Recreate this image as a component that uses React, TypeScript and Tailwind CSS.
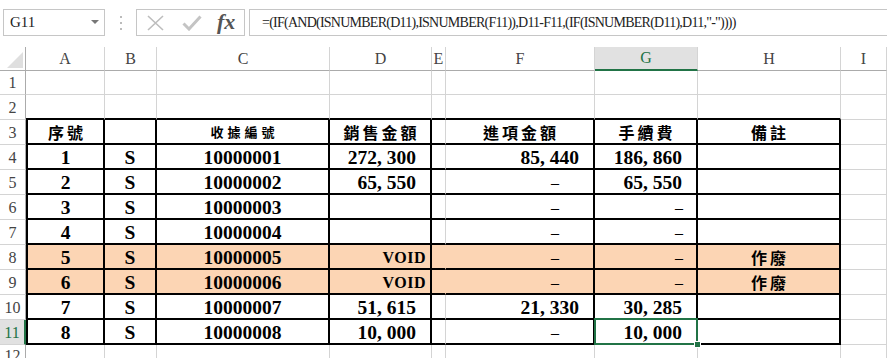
import React from 'react';

const SERIF = "font-['Liberation_Serif','Noto_Sans_CJK_TC',serif]";
const CJK = "font-['Noto_Sans_CJK_TC','Liberation_Serif',sans-serif]";

const COLS = ['A', 'B', 'C', 'D', 'E', 'F', 'G', 'H', 'I'];

type Cell = { t: string; kind?: 'num' | 'dashF' | 'dashG' | 'void' | 'center' | 'head' | 'headSmall' };

const dash = (col: 'F' | 'G'): Cell => ({ t: '–', kind: col === 'F' ? 'dashF' : 'dashG' });
const num = (t: string): Cell => ({ t, kind: 'num' });
const c = (t: string): Cell => ({ t, kind: 'center' });
const empty: Cell = { t: '' };

const TABLE: { cells: Cell[]; peach?: boolean }[] = [
  {
    cells: [
      { t: '序號', kind: 'head' },
      empty,
      { t: '收據編號', kind: 'headSmall' },
      { t: '銷售金額', kind: 'head' },
      empty,
      { t: '進項金額', kind: 'head' },
      { t: '手續費', kind: 'head' },
      { t: '備註', kind: 'head' },
    ],
  },
  { cells: [c('1'), c('S'), c('10000001'), num('272, 300'), empty, num('85, 440'), num('186, 860'), empty] },
  { cells: [c('2'), c('S'), c('10000002'), num('65, 550'), empty, dash('F'), num('65, 550'), empty] },
  { cells: [c('3'), c('S'), c('10000003'), empty, empty, dash('F'), dash('G'), empty] },
  { cells: [c('4'), c('S'), c('10000004'), empty, empty, dash('F'), dash('G'), empty] },
  { cells: [c('5'), c('S'), c('10000005'), { t: 'VOID', kind: 'void' }, empty, dash('F'), dash('G'), { t: '作廢', kind: 'head' }], peach: true },
  { cells: [c('6'), c('S'), c('10000006'), { t: 'VOID', kind: 'void' }, empty, dash('F'), dash('G'), { t: '作廢', kind: 'head' }], peach: true },
  { cells: [c('7'), c('S'), c('10000007'), num('51, 615'), empty, num('21, 330'), num('30, 285'), empty] },
  { cells: [c('8'), c('S'), c('10000008'), num('10, 000'), empty, dash('F'), num('10, 000'), empty] },
];

function CellText({ cell }: { cell: Cell }) {
  switch (cell.kind) {
    case 'head':
      return <span className={`${CJK} font-bold text-[16px] tracking-[3px] pl-[3px] text-black`}>{cell.t}</span>;
    case 'headSmall':
      return <span className={`${CJK} font-bold text-[13px] tracking-[4px] pl-[4px] text-black`}>{cell.t}</span>;
    case 'void':
      return <span className={`${SERIF} font-bold text-[16px] tracking-[0.5px] text-black`}>{cell.t}</span>;
    case 'dashF':
    case 'dashG':
      return <span className={`${SERIF} text-[16px] text-black`}>{cell.t}</span>;
    default:
      return <span className={`${SERIF} font-bold text-[19.5px] text-black`}>{cell.t}</span>;
  }
}

function justify(cell: Cell) {
  switch (cell.kind) {
    case 'num':
      return 'justify-end pr-[14px] pt-[2px]';
    case 'void':
      return 'justify-end pr-[4px] pt-[2px]';
    case 'dashF':
      return 'justify-end pr-[34px] pt-[2px]';
    case 'dashG':
      return 'justify-end pr-[13px] pt-[2px]';
    case 'center':
      return 'justify-center pt-[2px]';
    default:
      return 'justify-center pt-[1px]';
  }
}

function RowHeader({ n, selected }: { n: number; selected?: boolean }) {
  return (
    <div
      className={`${SERIF} flex items-center justify-center pt-[1px] text-[16px] border-b border-b-[#d4d4d4] ${
        selected
          ? 'bg-[#e1e1e1] text-[#217346] border-r-2 border-r-[#217346]'
          : 'bg-white text-[#444] border-r border-r-[#ababab]'
      }`}
    >
      {n}
    </div>
  );
}

function PlainRow({ n, thickBottom }: { n: number; thickBottom?: boolean }) {
  return (
    <>
      <RowHeader n={n} />
      {COLS.map((col, i) => (
        <div
          key={col}
          className={`border-r border-r-[#d4d4d4] ${
            thickBottom && i < 8 ? 'border-b-2 border-b-black' : 'border-b border-b-[#d4d4d4]'
          }`}
        />
      ))}
    </>
  );
}

function Toolbar() {
  return (
    <div className="h-[47px] flex items-start pt-[9px] bg-white">
      <div className="ml-[3px] w-[102px] h-[27px] border border-[#c6c6c6] flex items-center justify-between pl-[6px] pr-[5px]">
        <span className={`${SERIF} text-[15px] text-[#222]`}>G11</span>
        <svg width="8" height="5" viewBox="0 0 8 5">
          <path d="M0 0 L8 0 L4 4 Z" fill="#777" />
        </svg>
      </div>
      <div className="w-[31px] h-[27px] flex flex-col items-center justify-center gap-[4px]">
        <span className="w-[2px] h-[2px] bg-[#bbb]" />
        <span className="w-[2px] h-[2px] bg-[#bbb]" />
        <span className="w-[2px] h-[2px] bg-[#bbb]" />
      </div>
      <div className="w-[109px] h-[27px] border border-[#c6c6c6] flex items-center pl-[10px] gap-[18px]">
        <svg width="17" height="16" viewBox="0 0 17 16">
          <path d="M1 1 L16 15 M16 1 L1 15" stroke="#bdbdbd" strokeWidth="1.6" fill="none" />
        </svg>
        <svg width="20" height="16" viewBox="0 0 20 16">
          <path d="M1.5 8.5 L7 14 L18.5 1.5" stroke="#c4c4c4" strokeWidth="3" fill="none" />
        </svg>
        <span className={`${SERIF} italic font-bold text-[22px] leading-none text-[#555] -mt-[2px] -ml-[3px]`}>fx</span>
      </div>
      <div className="ml-[4px] flex-1 h-[27px] border-y border-l border-[#c6c6c6] flex items-center pl-[12px]">
        <span className={`${SERIF} text-[14px] tracking-[-0.75px] text-[#222] whitespace-nowrap`}>
          =(IF(AND(ISNUMBER(D11),ISNUMBER(F11)),D11-F11,(IF(ISNUMBER(D11),D11,"-"))))
        </span>
      </div>
    </div>
  );
}

export default function App() {
  return (
    <div className="w-[887px] h-[358px] overflow-hidden bg-white">
      <Toolbar />
      <div className="grid grid-cols-[26px_79px_52px_173px_102px_14px_149px_103px_143px_1fr] grid-rows-[24px_24px_25px_repeat(9,25px)_20px]">
        {/* column headers */}
        <div className="relative bg-white border-r border-r-[#ababab] border-b border-b-[#ababab]">
          <svg className="absolute left-[7px] top-[5px]" width="16" height="16" viewBox="0 0 16 16">
            <path d="M16 0 L16 16 L0 16 Z" fill="#dfdfdf" />
          </svg>
        </div>
        {COLS.map((col) =>
          col === 'G' ? (
            <div
              key={col}
              className={`${SERIF} flex items-center justify-center text-[16px] bg-[#e1e1e1] text-[#217346] border-r border-r-[#d4d4d4] border-b-2 border-b-[#217346]`}
            >
              {col}
            </div>
          ) : (
            <div
              key={col}
              className={`${SERIF} flex items-center justify-center text-[16px] bg-white text-[#444] border-r border-r-[#d4d4d4] border-b border-b-[#ababab]`}
            >
              {col}
            </div>
          )
        )}

        <PlainRow n={1} />
        <PlainRow n={2} thickBottom />

        {TABLE.map((row, r) => {
          const rowNum = r + 3;
          const selectedRow = rowNum === 11;
          return (
            <React.Fragment key={rowNum}>
              <RowHeader n={rowNum} selected={selectedRow} />
              {row.cells.map((cell, i) => {
                const isE = i === 4;
                const bg = row.peach ? 'bg-[#fcd5b4]' : 'bg-white';
                const right = isE
                  ? row.peach
                    ? 'border-r border-r-transparent'
                    : 'border-r border-r-[#d4d4d4]'
                  : 'border-r-2 border-r-black';
                const left = i === 0 ? 'border-l-2 border-l-black' : '';
                const isSel = selectedRow && i === 6;
                return (
                  <div
                    key={i}
                    className={`relative flex items-center whitespace-nowrap ${bg} ${right} ${left} border-b-2 border-b-black ${justify(cell)} ${isSel ? 'z-10' : ''}`}
                  >
                    <CellText cell={cell} />
                    {isSel && (
                      <>
                        <div className="absolute -left-[1px] -top-[2px] -right-[2px] -bottom-[2px] border-2 border-[#217346]" />
                        <div className="absolute -right-[5px] -bottom-[5px] w-[7px] h-[7px] bg-[#217346] border border-white" />
                      </>
                    )}
                  </div>
                );
              })}
              <div className="border-r border-r-[#d4d4d4] border-b border-b-[#d4d4d4]" />
            </React.Fragment>
          );
        })}

        {/* row 12, only its top shows */}
        <div className={`${SERIF} flex items-start justify-center pt-[2px] text-[16px] leading-[18px] text-[#444] bg-white border-r border-r-[#ababab]`}>
          12
        </div>
        {COLS.map((col) => (
          <div key={col} className="border-r border-r-[#d4d4d4]" />
        ))}
      </div>
    </div>
  );
}
